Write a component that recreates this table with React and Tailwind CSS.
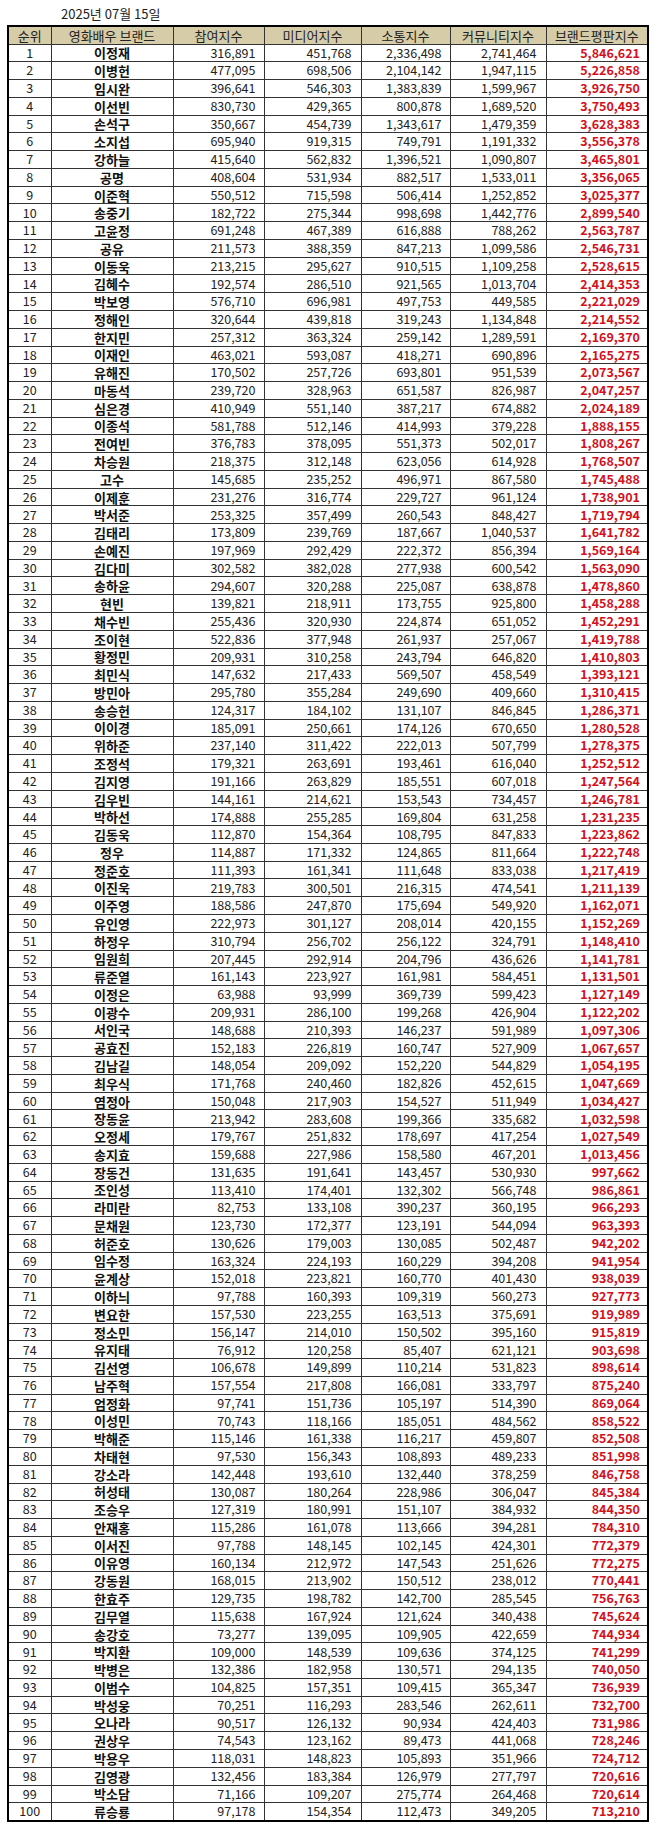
import React from 'react';

const raw = `이정재 316,891 451,768 2,336,498 2,741,464 5,846,621
이병헌 477,095 698,506 2,104,142 1,947,115 5,226,858
임시완 396,641 546,303 1,383,839 1,599,967 3,926,750
이선빈 830,730 429,365 800,878 1,689,520 3,750,493
손석구 350,667 454,739 1,343,617 1,479,359 3,628,383
소지섭 695,940 919,315 749,791 1,191,332 3,556,378
강하늘 415,640 562,832 1,396,521 1,090,807 3,465,801
공명 408,604 531,934 882,517 1,533,011 3,356,065
이준혁 550,512 715,598 506,414 1,252,852 3,025,377
송중기 182,722 275,344 998,698 1,442,776 2,899,540
고윤정 691,248 467,389 616,888 788,262 2,563,787
공유 211,573 388,359 847,213 1,099,586 2,546,731
이동욱 213,215 295,627 910,515 1,109,258 2,528,615
김혜수 192,574 286,510 921,565 1,013,704 2,414,353
박보영 576,710 696,981 497,753 449,585 2,221,029
정해인 320,644 439,818 319,243 1,134,848 2,214,552
한지민 257,312 363,324 259,142 1,289,591 2,169,370
이재인 463,021 593,087 418,271 690,896 2,165,275
유해진 170,502 257,726 693,801 951,539 2,073,567
마동석 239,720 328,963 651,587 826,987 2,047,257
심은경 410,949 551,140 387,217 674,882 2,024,189
이종석 581,788 512,146 414,993 379,228 1,888,155
전여빈 376,783 378,095 551,373 502,017 1,808,267
차승원 218,375 312,148 623,056 614,928 1,768,507
고수 145,685 235,252 496,971 867,580 1,745,488
이제훈 231,276 316,774 229,727 961,124 1,738,901
박서준 253,325 357,499 260,543 848,427 1,719,794
김태리 173,809 239,769 187,667 1,040,537 1,641,782
손예진 197,969 292,429 222,372 856,394 1,569,164
김다미 302,582 382,028 277,938 600,542 1,563,090
송하윤 294,607 320,288 225,087 638,878 1,478,860
현빈 139,821 218,911 173,755 925,800 1,458,288
채수빈 255,436 320,930 224,874 651,052 1,452,291
조이현 522,836 377,948 261,937 257,067 1,419,788
황정민 209,931 310,258 243,794 646,820 1,410,803
최민식 147,632 217,433 569,507 458,549 1,393,121
방민아 295,780 355,284 249,690 409,660 1,310,415
송승헌 124,317 184,102 131,107 846,845 1,286,371
이이경 185,091 250,661 174,126 670,650 1,280,528
위하준 237,140 311,422 222,013 507,799 1,278,375
조정석 179,321 263,691 193,461 616,040 1,252,512
김지영 191,166 263,829 185,551 607,018 1,247,564
김우빈 144,161 214,621 153,543 734,457 1,246,781
박하선 174,888 255,285 169,804 631,258 1,231,235
김동욱 112,870 154,364 108,795 847,833 1,223,862
정우 114,887 171,332 124,865 811,664 1,222,748
정준호 111,393 161,341 111,648 833,038 1,217,419
이진욱 219,783 300,501 216,315 474,541 1,211,139
이주영 188,586 247,870 175,694 549,920 1,162,071
유인영 222,973 301,127 208,014 420,155 1,152,269
하정우 310,794 256,702 256,122 324,791 1,148,410
임원희 207,445 292,914 204,796 436,626 1,141,781
류준열 161,143 223,927 161,981 584,451 1,131,501
이정은 63,988 93,999 369,739 599,423 1,127,149
이광수 209,931 286,100 199,268 426,904 1,122,202
서인국 148,688 210,393 146,237 591,989 1,097,306
공효진 152,183 226,819 160,747 527,909 1,067,657
김남길 148,054 209,092 152,220 544,829 1,054,195
최우식 171,768 240,460 182,826 452,615 1,047,669
염정아 150,048 217,903 154,527 511,949 1,034,427
장동윤 213,942 283,608 199,366 335,682 1,032,598
오정세 179,767 251,832 178,697 417,254 1,027,549
송지효 159,688 227,986 158,580 467,201 1,013,456
장동건 131,635 191,641 143,457 530,930 997,662
조인성 113,410 174,401 132,302 566,748 986,861
라미란 82,753 133,108 390,237 360,195 966,293
문채원 123,730 172,377 123,191 544,094 963,393
허준호 130,626 179,003 130,085 502,487 942,202
임수정 163,324 224,193 160,229 394,208 941,954
윤계상 152,018 223,821 160,770 401,430 938,039
이하늬 97,788 160,393 109,319 560,273 927,773
변요한 157,530 223,255 163,513 375,691 919,989
정소민 156,147 214,010 150,502 395,160 915,819
유지태 76,912 120,258 85,407 621,121 903,698
김선영 106,678 149,899 110,214 531,823 898,614
남주혁 157,554 217,808 166,081 333,797 875,240
엄정화 97,741 151,736 105,197 514,390 869,064
이성민 70,743 118,166 185,051 484,562 858,522
박해준 115,146 161,338 116,217 459,807 852,508
차태현 97,530 156,343 108,893 489,233 851,998
강소라 142,448 193,610 132,440 378,259 846,758
허성태 130,087 180,264 228,986 306,047 845,384
조승우 127,319 180,991 151,107 384,932 844,350
안재홍 115,286 161,078 113,666 394,281 784,310
이서진 97,788 148,145 102,145 424,301 772,379
이유영 160,134 212,972 147,543 251,626 772,275
강동원 168,015 213,902 150,512 238,012 770,441
한효주 129,735 198,782 142,700 285,545 756,763
김무열 115,638 167,924 121,624 340,438 745,624
송강호 73,277 139,095 109,905 422,659 744,934
박지환 109,000 148,539 109,636 374,125 741,299
박병은 132,386 182,958 130,571 294,135 740,050
이범수 104,825 157,351 109,415 365,347 736,939
박성웅 70,251 116,293 283,546 262,611 732,700
오나라 90,517 126,132 90,934 424,403 731,986
권상우 74,543 123,162 89,473 441,068 728,246
박용우 118,031 148,823 105,893 351,966 724,712
김영광 132,456 183,384 126,979 277,797 720,616
박소담 71,166 109,207 275,774 264,468 720,614
류승룡 97,178 154,354 112,473 349,205 713,210`;

const rows = raw.split('\n').map((line) => line.split(' '));

const headers = ['순위', '영화배우 브랜드', '참여지수', '미디어지수', '소통지수', '커뮤니티지수', '브랜드평판지수'];

export default function App() {
  return (
    <div
      className="w-[658px] min-h-[1827px] bg-white text-[#222]"
      style={{ fontFamily: '"Noto Sans CJK KR", "Noto Sans", sans-serif' }}
    >
      {/* date */}
      <div className="h-[25px] pl-[61px] pt-[6px] text-[13px] leading-[16px]">2025년 07월 15일</div>

      <table className="ml-[7px] w-[640px] table-fixed border-collapse border-2 border-black text-[12.5px] leading-none">
        <colgroup>
          <col className="w-[43px]" />
          <col className="w-[122px]" />
          <col className="w-[91px]" />
          <col className="w-[97px]" />
          <col className="w-[89px]" />
          <col className="w-[96px]" />
          <col className="w-[102px]" />
        </colgroup>
        <thead>
          <tr className="h-[18px] bg-[#d6cca8]">
            {headers.map((h) => (
              <th key={h} className="border border-[#333] p-0 text-center text-[13px] font-normal text-[#222]">
                {h}
              </th>
            ))}
          </tr>
        </thead>
        <tbody>
          {rows.map((r, i) => (
            <tr key={i} className="h-[17.77px]">
              <td className="border border-[#333] p-0 text-center">{i + 1}</td>
              <td className="border border-[#333] p-0 text-center text-[13px] font-bold text-[#111]">{r[0]}</td>
              <td className="border border-[#333] p-0 pr-[8px] text-right">{r[1]}</td>
              <td className="border border-[#333] p-0 pr-[9px] text-right">{r[2]}</td>
              <td className="border border-[#333] p-0 pr-[8px] text-right">{r[3]}</td>
              <td className="border border-[#333] p-0 pr-[9px] text-right">{r[4]}</td>
              <td className="border border-[#333] p-0 pr-[7px] text-right font-bold text-[#d4101c]">{r[5]}</td>
            </tr>
          ))}
        </tbody>
      </table>
    </div>
  );
}
